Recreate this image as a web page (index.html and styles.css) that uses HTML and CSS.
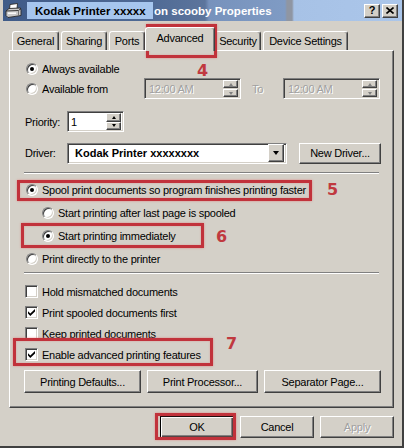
FILE: index.html
```html
<!DOCTYPE html>
<html>
<head>
<meta charset="utf-8">
<link rel="stylesheet" href="styles.css">
</head>
<body>
<div class="window">
  <div class="titlebar">
    <svg class="app-icon" width="17" height="16" viewBox="0 0 17 16">
      <path d="M5 1.5 L12.5 0.5 L12 6 L4.5 6.5 Z" fill="#fff" stroke="#2a2a2a" stroke-width="0.9"/>
      <path d="M1 8 L4 5.5 L15.5 5 L16 7.5 L16 12.5 L3 14.5 L1 12.5 Z" fill="#c9c9c9" stroke="#2a2a2a" stroke-width="0.9"/>
      <path d="M1 8 L13.5 7.5 L16 5.5" fill="none" stroke="#2a2a2a" stroke-width="0.9"/>
      <path d="M13.5 7.5 L13.5 13" fill="none" stroke="#6a6a6a" stroke-width="0.9"/>
      <rect x="3" y="9.5" width="8" height="1.4" fill="#ffffff"/>
    </svg>
    <span class="title-hl">Kodak Printer xxxxx</span>
    <span class="title-rest">on scooby Properties</span>
    <div class="caption-btns">
      <span class="cbtn">?</span>
      <span class="cbtn"><svg width="8" height="7" viewBox="0 0 8 7"><path d="M0.5 0.5 L7.5 6.5 M7.5 0.5 L0.5 6.5" stroke="#000" stroke-width="1.6"/></svg></span>
    </div>
  </div>

  <div class="client">
    <div class="tabs">
      <div class="tab tab-general">General</div>
      <div class="tab tab-sharing">Sharing</div>
      <div class="tab tab-ports">Ports</div>
      <div class="tab tab-advanced selected">Advanced</div>
      <div class="tab tab-security">Security</div>
      <div class="tab tab-device">Device Settings</div>
    </div>

    <div class="panel">
      <div class="row row-18">
        <span class="radio checked"></span><span>Always available</span>
      </div>
      <div class="row row-21">
        <div class="from-group"><span class="radio"></span><span>Available from</span></div>
        <div class="field timefield">
          <span class="dis-text">12:00 AM</span>
          <div class="spin">
            <span class="spin-btn"><i class="arr up dis"></i></span>
            <span class="spin-btn"><i class="arr down dis"></i></span>
          </div>
        </div>
        <span class="to-label dis-text">To</span>
        <div class="field timefield">
          <span class="dis-text">12:00 AM</span>
          <div class="spin">
            <span class="spin-btn"><i class="arr up dis"></i></span>
            <span class="spin-btn"><i class="arr down dis"></i></span>
          </div>
        </div>
      </div>

      <div class="row row-21 mt-12">
        <span class="field-label">Priority:</span>
        <div class="field white prio">
          <span class="prio-val">1</span>
          <div class="spin">
            <span class="spin-btn"><i class="arr up"></i></span>
            <span class="spin-btn"><i class="arr down"></i></span>
          </div>
        </div>
      </div>

      <div class="row row-22 mt-10">
        <span class="field-label">Driver:</span>
        <div class="field white combo">
          <span class="combo-val">Kodak Printer xxxxxxxx</span>
          <span class="drop-btn"><i class="arr down big"></i></span>
        </div>
        <span class="btn new-driver">New Driver...</span>
      </div>

      <div class="sep mt-8"></div>

      <div class="row row-22 mt-5">
        <span class="radio checked"></span><span>Spool print documents so program finishes printing faster</span>
      </div>
      <div class="row row-23 sub">
        <span class="radio"></span><span>Start printing after last page is spooled</span>
      </div>
      <div class="row row-23 sub">
        <span class="radio checked"></span><span>Start printing immediately</span>
      </div>
      <div class="row row-23">
        <span class="radio"></span><span>Print directly to the printer</span>
      </div>

      <div class="sep mt-2"></div>

      <div class="checks">
        <div class="row row-21"><span class="check"></span><span>Hold mismatched documents</span></div>
        <div class="row row-21"><span class="check"><svg width="7" height="7" viewBox="0 0 7 7"><path d="M0 2.2 L2.3 4.5 L7 0 L7 2.4 L2.3 7 L0 4.6 Z" fill="#000"/></svg></span><span>Print spooled documents first</span></div>
        <div class="row row-21"><span class="check"></span><span>Keep printed documents</span></div>
        <div class="row row-21"><span class="check"><svg width="7" height="7" viewBox="0 0 7 7"><path d="M0 2.2 L2.3 4.5 L7 0 L7 2.4 L2.3 7 L0 4.6 Z" fill="#000"/></svg></span><span>Enable advanced printing features</span></div>
      </div>

      <div class="btn-row">
        <span class="btn w117">Printing Defaults...</span>
        <span class="btn w111">Print Processor...</span>
        <span class="btn w117">Separator Page...</span>
      </div>
    </div>

    <div class="dlg-buttons">
      <span class="btn dlg default">OK</span>
      <span class="btn dlg">Cancel</span>
      <span class="btn dlg disabled"><span class="dis-text">Apply</span></span>
    </div>
  </div>

  <div class="mark mark-adv"></div>
  <div class="mark mark-5"></div>
  <div class="mark mark-6"></div>
  <div class="mark mark-7"></div>
  <div class="mark mark-ok"></div>
  <span class="num num-4">4</span>
  <span class="num num-5">5</span>
  <span class="num num-6">6</span>
  <span class="num num-7">7</span>
</div>
</body>
</html>
```

FILE: styles.css
```css
* { box-sizing: border-box; }
html, body { margin: 0; padding: 0; }
body {
  width: 404px;
  height: 448px;
  overflow: hidden;
  background: #d4d0c8;
  font-family: "Liberation Sans", Arial, sans-serif;
  font-size: 11px;
  letter-spacing: -0.25px;
  color: #000;
}
.window {
  position: relative;
  width: 404px;
  height: 448px;
  background: #d4d0c8;
  padding-left: 3px;
  border-right: 2px solid #404040;
  border-bottom: 2px solid #404040;
}

/* Title bar */
.titlebar {
  height: 21px;
  display: flex;
  align-items: center;
  background: linear-gradient(90deg, #3f5b88 0px, #4f6a95 147px, #5c759c 202px, #7792bc 206px, #7f9bc4 282px, #8f96a3 284px, #8f96a3 289px, #a7c2e6 291px, #abc6ea 100%);
  color: #fff;
  font-weight: bold;
  font-size: 11.5px;
  letter-spacing: 0;
}
.app-icon { margin-left: 2px; flex: none; }
.title-hl {
  margin-left: 5px;
  width: 126px;
  height: 17px;
  padding-left: 8px;
  background: #a6c6ee;
  color: #000;
  display: flex;
  align-items: center;
}
.title-rest { margin-left: 1px; white-space: nowrap; }
.caption-btns { margin-left: auto; margin-right: 4px; display: flex; gap: 2px; }
.cbtn {
  width: 16px;
  height: 14px;
  background: #d4d0c8;
  border: 1px solid;
  border-color: #fff #404040 #404040 #fff;
  box-shadow: inset -1px -1px #808080;
  color: #000;
  font-size: 11px;
  font-weight: bold;
  display: flex;
  align-items: center;
  justify-content: center;
  line-height: 1;
}

/* Client */
.client { padding: 6px 8px 0 6px; }
.tabs {
  height: 23px;
  display: flex;
  align-items: flex-end;
  padding-left: 3px;
}
.tab {
  height: 19px;
  margin-right: 2px;
  border: 1px solid;
  border-bottom: none;
  border-color: #fff #404040 transparent #fff;
  border-radius: 3px 3px 0 0;
  box-shadow: inset -1px 0 #808080;
  display: flex;
  align-items: center;
  justify-content: center;
  white-space: nowrap;
  background: #d4d0c8;
}
.tab-general { width: 47px; }
.tab-sharing { width: 46px; }
.tab-ports { width: 36px; }
.tab-advanced { width: 66px; }
.tab-security { width: 46px; }
.tab-device { width: 85px; }
.tab.selected {
  position: relative;
  z-index: 1;
  height: 24px;
  width: 70px;
  margin: 0 0 -1px -2px;
  padding-bottom: 3px;
}

.panel {
  height: 358px;
  border: 1px solid;
  border-color: #fff #404040 #404040 #fff;
  box-shadow: inset -1px -1px #808080;
  padding: 9px 0 0 15px;
}
.row { display: flex; align-items: center; white-space: nowrap; }
.row-18 { height: 18px; }
.row-21 { height: 21px; }
.row-22 { height: 22px; }
.row-23 { height: 23px; }
.mt-2 { margin-top: 2px; }
.mt-5 { margin-top: 5px; }
.mt-8 { margin-top: 8px; }
.mt-10 { margin-top: 10px; }
.mt-12 { margin-top: 12px; }
.sub { padding-left: 16px; }

.radio {
  flex: none;
  width: 12px;
  height: 12px;
  margin: 0 4px 0 1px;
  border-radius: 50%;
  background: #fff;
  border: 1px solid;
  border-color: #808080 #fff #fff #808080;
  box-shadow: inset 1px 1px #404040, inset -1px -1px #d4d0c8;
  position: relative;
}
.radio.checked::after {
  content: "";
  position: absolute;
  left: 3px;
  top: 3px;
  width: 4px;
  height: 4px;
  border-radius: 50%;
  background: #000;
}
.check {
  flex: none;
  width: 13px;
  height: 13px;
  margin-right: 4px;
  background: #fff;
  border: 1px solid;
  border-color: #808080 #fff #fff #808080;
  box-shadow: inset 1px 1px #404040, inset -1px -1px #d4d0c8;
  display: flex;
  align-items: center;
  justify-content: center;
}

.from-group { width: 119px; display: flex; align-items: center; }
.field {
  height: 21px;
  border: 1px solid;
  border-color: #808080 #fff #fff #808080;
  box-shadow: inset 1px 1px #404040, inset -1px -1px #d4d0c8;
  display: flex;
  align-items: center;
  padding: 2px;
}
.field.white { background: #fff; }
.timefield { width: 97px; padding-left: 4px; }
.dis-text { color: #a0a0a0; text-shadow: 1px 1px #fff; }
.to-label { width: 42px; padding-left: 11px; }
.spin {
  margin-left: auto;
  width: 15px;
  height: 17px;
  display: flex;
  flex-direction: column;
  justify-content: space-between;
}
.spin-btn {
  height: 8px;
  background: #d4d0c8;
  border: 1px solid;
  border-color: #fff #404040 #404040 #fff;
  box-shadow: inset -1px -1px #808080;
  display: flex;
  align-items: center;
  justify-content: center;
}
.arr { display: block; width: 0; height: 0; border-left: 2.5px solid transparent; border-right: 2.5px solid transparent; }
.arr.up { border-bottom: 3px solid #000; }
.arr.down { border-top: 3px solid #000; }
.arr.up.dis { border-bottom-color: #808080; }
.arr.down.dis { border-top-color: #808080; }
.arr.big { border-left-width: 3.5px; border-right-width: 3.5px; border-top-width: 4px; }

.field-label { width: 42px; }
.prio { width: 57px; }
.prio .spin { height: 17px; }
.prio .spin-btn { height: 8.5px; }
.prio-val { padding-left: 1px; }
.combo { width: 220px; padding-right: 2px; }
.combo-val { font-weight: bold; letter-spacing: 0; padding-left: 5px; }
.drop-btn {
  margin-left: auto;
  width: 16px;
  height: 18px;
  background: #d4d0c8;
  border: 1px solid;
  border-color: #fff #404040 #404040 #fff;
  box-shadow: inset -1px -1px #808080;
  display: flex;
  align-items: center;
  justify-content: center;
}

.btn {
  flex: none;
  height: 22px;
  background: #d4d0c8;
  border: 1px solid;
  border-color: #fff #404040 #404040 #fff;
  box-shadow: inset -1px -1px #808080;
  display: flex;
  align-items: center;
  justify-content: center;
  white-space: nowrap;
}
.new-driver { width: 82px; height: 21px; margin-left: 12px; }

.sep {
  width: 355px;
  height: 2px;
  margin-left: -1px;
  border-top: 1px solid #808080;
  border-bottom: 1px solid #fff;
}
.checks { margin-top: 7px; }
.btn-row { margin-top: 5px; margin-left: -1px; display: flex; gap: 6px; }
.btn-row .btn { height: 23px; }
.w117 { width: 117px; }
.w111 { width: 111px; }

.dlg-buttons {
  margin-top: 8px;
  display: flex;
  justify-content: flex-end;
  gap: 6px;
}
.btn.dlg { width: 74px; height: 22px; }
.btn.default {
  border: 1px solid #000;
  box-shadow: inset 1px 1px #fff, inset -1px -1px #404040, inset -2px -2px #808080;
}

/* Annotations (overlays) */
.mark {
  position: absolute;
  border: 3px solid #c1323b;
  box-shadow: 0 0 2px rgba(230, 110, 110, 0.7), inset 0 0 2px rgba(230, 110, 110, 0.5);
}
.mark-adv { left: 146px; top: 24px; width: 71px; height: 34px; }
.mark-5 { left: 17px; top: 180px; width: 295px; height: 21px; }
.mark-6 { left: 21px; top: 223px; width: 183px; height: 25px; }
.mark-7 { left: 13px; top: 338px; width: 200px; height: 28px; }
.mark-ok { left: 155px; top: 413px; width: 81px; height: 27px; }
.num {
  position: absolute;
  font-family: "DejaVu Sans", sans-serif;
  font-weight: bold;
  font-size: 16px;
  line-height: 16px;
  letter-spacing: 0;
  color: #c0393f;
}
.num-4 { left: 197px; top: 63px; }
.num-5 { left: 327px; top: 182px; }
.num-6 { left: 216px; top: 229px; }
.num-7 { left: 226px; top: 336px; }
```
